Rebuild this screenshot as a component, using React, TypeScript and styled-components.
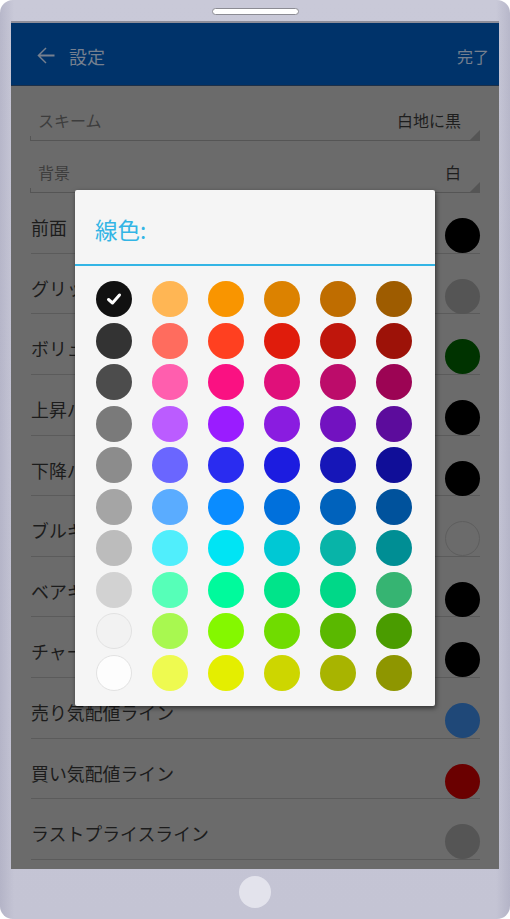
import React from "react";
import styled, { createGlobalStyle } from "styled-components";

const Global = createGlobalStyle`
  html, body { margin: 0; padding: 0; background: #ffffff; }
  body { font-family: "Noto Sans CJK JP", "Noto Sans", sans-serif; }
  * { box-sizing: border-box; }
`;

const Frame = styled.div`
  width: 510px;
  height: 919px;
  border-radius: 13px;
  background:
    linear-gradient(to right, rgba(150,150,175,0.35) 0, rgba(150,150,175,0) 14px, rgba(150,150,175,0) calc(100% - 14px), rgba(150,150,175,0.35) 100%),
    linear-gradient(to bottom, #c9c9d8 0, #c6c6d6 50%, #c4c4d4 100%);
  display: flex;
  flex-direction: column;
  align-items: center;
  overflow: hidden;
`;

const Speaker = styled.div`
  width: 87px;
  height: 7px;
  margin-top: 8px;
  border-radius: 4px;
  background: #ffffff;
  border: 1px solid #8c8c94;
`;

const Screen = styled.div`
  position: relative;
  width: 488px;
  height: 848px;
  margin-top: 6px;
  overflow: hidden;
  background: #6b6b6b;
  display: flex;
  flex-direction: column;
`;

const Header = styled.div`
  height: 65px;
  flex: none;
  border-top: 2px solid #8e8e9a;
  border-bottom: 1px solid #1e3048;
  background: #00336a;
  display: flex;
  align-items: center;
  padding: 3px 10px 0 21px;
  color: #76808f;
`;

const BackIcon = styled.svg`
  width: 27px;
  height: 27px;
  margin-right: 10px;
  fill: #76808f;
`;

const HeaderTitle = styled.div`
  font-size: 18px;
  flex: 1;
`;

const HeaderAction = styled.div`
  font-size: 16px;
`;

const Content = styled.div`
  padding: 3px 19px 0 19px;
  display: flex;
  flex-direction: column;
`;

const SpinnerRow = styled.div`
  position: relative;
  height: 52px;
  display: flex;
  align-items: flex-start;
  justify-content: space-between;
  padding: 19px 19px 0 8px;
  border-bottom: 1px solid #555555;
  font-size: 16px;
  line-height: 24px;
  &::before {
    content: "";
    position: absolute;
    left: 0;
    bottom: 0;
    width: 1px;
    height: 4px;
    background: #555555;
  }
  &::after {
    content: "";
    position: absolute;
    right: 0;
    bottom: 0;
    width: 0;
    height: 0;
    border-left: 10px solid transparent;
    border-bottom: 10px solid #555555;
  }
`;

const SpinnerLabel = styled.span`
  color: #3d3d3d;
`;

const SpinnerValue = styled.span`
  color: #1e1e1e;
`;

const ListRow = styled.div`
  height: 60.65px;
  margin-left: 1px;
  display: flex;
  justify-content: space-between;
  align-items: flex-start;
  border-bottom: 1px solid #5b5b5b;
`;

const RowLabel = styled.span`
  font-size: 17.9px;
  line-height: 24px;
  padding-top: 22px;
  color: #1c1c1c;
  white-space: nowrap;
`;

const Swatch = styled.div<{ $c: string; $outline?: boolean }>`
  width: 35px;
  height: 35px;
  margin-top: 25px;
  border-radius: 50%;
  background: ${(p) => p.$c};
  border: ${(p) => (p.$outline ? "1px solid #5e5e5e" : "none")};
`;

const Dialog = styled.div`
  position: absolute;
  left: 64px;
  top: 169px;
  width: 360px;
  height: 516px;
  background: #f5f5f5;
  border-radius: 2px;
  box-shadow: 1px 2px 5px rgba(0, 0, 0, 0.55);
  display: flex;
  flex-direction: column;
`;

const DialogTitle = styled.div`
  height: 76px;
  padding: 4px 0 0 20px;
  display: flex;
  align-items: center;
  font-size: 22.5px;
  color: #33b5e5;
  border-bottom: 2px solid #33b5e5;
`;

const Grid = styled.div`
  display: grid;
  grid-template-columns: repeat(6, 36px);
  grid-auto-rows: 36px;
  column-gap: 20px;
  row-gap: 5.5px;
  padding: 15px 0 0 21px;
`;

const Dot = styled.div<{ $c: string; $outline?: boolean }>`
  width: 36px;
  height: 36px;
  border-radius: 50%;
  background: ${(p) => p.$c};
  border: ${(p) => (p.$outline ? "1px solid #e2e2e2" : "none")};
  display: flex;
  align-items: center;
  justify-content: center;
`;

const Check = styled.svg`
  width: 16px;
  height: 16px;
  stroke: #ffffff;
  stroke-width: 3;
  fill: none;
  stroke-linecap: round;
  stroke-linejoin: round;
`;

const HomeArea = styled.div`
  flex: 1;
  display: flex;
  align-items: center;
  justify-content: center;
  padding-bottom: 4px;
`;

const HomeButton = styled.div`
  width: 32px;
  height: 32px;
  border-radius: 50%;
  background: #e3e3ec;
`;

const palette: string[][] = [
  ["#111111", "#ffb654", "#f99500", "#dc8200", "#bf6d00", "#9e5c00"],
  ["#333333", "#ff6c5e", "#ff4020", "#e01c0c", "#bf160c", "#9d1208"],
  ["#4c4c4c", "#ff5eae", "#fa1182", "#e0107a", "#bc0c6a", "#9c0454"],
  ["#7a7a7a", "#bb5cff", "#9a1cff", "#8a1ce0", "#7212c0", "#5c0c9c"],
  ["#8c8c8c", "#6a66ff", "#2a2cf0", "#1c1ce0", "#1616b8", "#100e98"],
  ["#a5a5a5", "#5aacff", "#0a8cff", "#0070dc", "#0062bc", "#00529c"],
  ["#bcbcbc", "#50eefc", "#00e4f4", "#00c8d4", "#08b4a8", "#008e94"],
  ["#d2d2d2", "#56ffb8", "#00fa9c", "#00e48a", "#00d888", "#36b472"],
  ["#f2f2f2", "#a8f850", "#84f800", "#70dc00", "#5ab800", "#4a9c00"],
  ["#fdfdfd", "#eefa50", "#e4ee00", "#cdd600", "#a8b400", "#8e9600"],
];

const rows: { label: string; color: string; outline?: boolean }[] = [
  { label: "前面", color: "#000000" },
  { label: "グリッド", color: "#555555" },
  { label: "ボリューム", color: "#003300" },
  { label: "上昇バー", color: "#000000" },
  { label: "下降バー", color: "#000000" },
  { label: "ブルキャンドル", color: "#6b6b6b", outline: true },
  { label: "ベアキャンドル", color: "#000000" },
  { label: "チャートライン", color: "#000000" },
  { label: "売り気配値ライン", color: "#1f4878" },
  { label: "買い気配値ライン", color: "#6a0000" },
  { label: "ラストプライスライン", color: "#555555" },
];

export default function App() {
  return (
    <>
      <Global />
      <Frame>
        <Speaker />
        <Screen>
          <Header>
            <BackIcon viewBox="0 0 24 24">
              <path d="M20 11.2H7.5l5.4-5.4L12 4.8 4.8 12l7.2 7.2.9-1L7.5 12.8H20z" />
            </BackIcon>
            <HeaderTitle>設定</HeaderTitle>
            <HeaderAction>完了</HeaderAction>
          </Header>
          <Content>
            <SpinnerRow>
              <SpinnerLabel>スキーム</SpinnerLabel>
              <SpinnerValue>白地に黒</SpinnerValue>
            </SpinnerRow>
            <SpinnerRow>
              <SpinnerLabel>背景</SpinnerLabel>
              <SpinnerValue>白</SpinnerValue>
            </SpinnerRow>
            {rows.map((r) => (
              <ListRow key={r.label}>
                <RowLabel>{r.label}</RowLabel>
                <Swatch $c={r.color} $outline={r.outline} />
              </ListRow>
            ))}
          </Content>
          <Dialog>
            <DialogTitle>線色:</DialogTitle>
            <Grid>
              {palette.flatMap((row, ri) =>
                row.map((c, ci) => (
                  <Dot key={`${ri}-${ci}`} $c={c} $outline={ci === 0 && ri >= 8}>
                    {ri === 0 && ci === 0 && (
                      <Check viewBox="0 0 16 16">
                        <polyline points="2.5,8.5 6.5,12 13.5,4" />
                      </Check>
                    )}
                  </Dot>
                ))
              )}
            </Grid>
          </Dialog>
        </Screen>
        <HomeArea>
          <HomeButton />
        </HomeArea>
      </Frame>
    </>
  );
}
